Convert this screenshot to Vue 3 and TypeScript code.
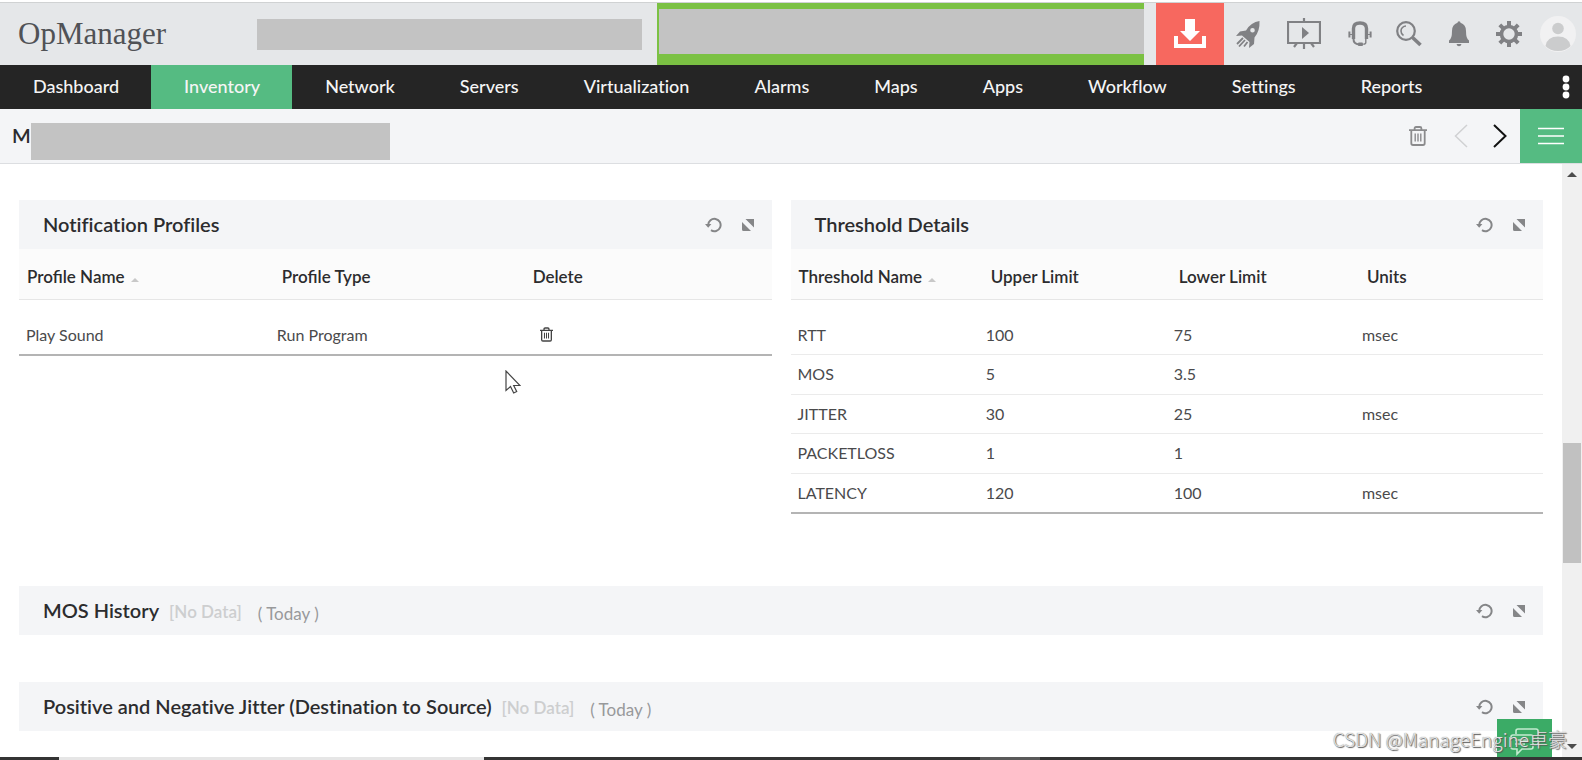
<script setup lang="ts">
interface Column { label: string; sortable?: boolean }

const navItems: string[] = [
  'Dashboard', 'Inventory', 'Network', 'Servers', 'Virtualization', 'Alarms',
  'Maps', 'Apps', 'Workflow', 'Settings', 'Reports',
]
const activeItem = 'Inventory'

const profileColumns: Column[] = [
  { label: 'Profile Name', sortable: true },
  { label: 'Profile Type' },
  { label: 'Delete' },
]
const profiles = [{ name: 'Play Sound', type: 'Run Program' }]

const thresholdColumns: Column[] = [
  { label: 'Threshold Name', sortable: true },
  { label: 'Upper Limit' },
  { label: 'Lower Limit' },
  { label: 'Units' },
]
const thresholds: string[][] = [
  ['RTT', '100', '75', 'msec'],
  ['MOS', '5', '3.5', ''],
  ['JITTER', '30', '25', 'msec'],
  ['PACKETLOSS', '1', '1', ''],
  ['LATENCY', '120', '100', 'msec'],
]

const charts: string[] = ['MOS History', 'Positive and Negative Jitter (Destination to Source)']
</script>

<template>
  <svg class="symbols" aria-hidden="true">
    <symbol id="refresh" viewBox="0 0 17 16">
      <path d="M3.2 8A6.2 6.2 0 1 1 6 13.2" fill="none" stroke="currentColor" stroke-width="2" />
      <path d="M0 7h6.4L3.2 10.8z" fill="currentColor" />
    </symbol>
    <symbol id="expand" viewBox="0 0 12 12">
      <path d="M3.500 0H12v8.500zM0 3L9 12H1.5A1.5 1.5 0 0 1 0 10.5z" fill="currentColor" />
    </symbol>
    <symbol id="trash" viewBox="0 0 18 20">
      <g fill="none" stroke="currentColor" stroke-width="1.8">
        <path d="M0 4.2h18M5.6 4V2.4Q5.6 1 7 1h4q1.4 0 1.4 1.4V4M2.3 4.5v12.8q0 1.7 1.7 1.7h10q1.7 0 1.7-1.7V4.5" />
        <path d="M6.2 7.5v8M9 7.5v8M11.8 7.5v8" stroke-width="1.4" />
      </g>
    </symbol>
  </svg>

  <div class="app">
    <header class="topbar">
      <span class="brand">OpManager</span>
      <div class="notice"></div>
      <div class="banner"><div class="banner-fill"></div></div>
      <div class="tools">
        <button class="download" aria-label="Download">
          <svg width="32" height="30" viewBox="0 0 32 30" fill="#fff">
            <path d="M11 0h10v12h5L16 22 6 12h5z" />
            <path d="M0 17h4v8h24v-8h4v12H0z" />
          </svg>
        </button>
        <button class="tool rocket" aria-label="Quick start">
          <svg width="24" height="28" viewBox="0 0 24 28">
            <path fill="currentColor" fill-rule="evenodd" d="M23.5 1Q15 2 10 10.500L4 11.500 0 16l6-.5 7.500 6.500-.5 6 5-4 .5-6.500Q24 11 23.500 1zM16.500 8a2.300 2.300 0 1 1 0 4.600 2.300 2.300 0 0 1 0-4.600z" />
            <path d="M7 18l-6 6M9 20l-6 6.500M11.500 22L8 26.500" stroke="currentColor" stroke-width="1.8" />
          </svg>
        </button>
        <button class="tool board" aria-label="Presentation">
          <svg width="34" height="32" viewBox="0 0 34 32">
            <path d="M1 4h32v21H1zM17 0v4M17 25v6M10 25l-3 4M24 25l3 4" fill="none" stroke="currentColor" stroke-width="2.200" />
            <path d="M15 9l7 6-7 6z" fill="currentColor" />
          </svg>
        </button>
        <button class="tool headset" aria-label="Support">
          <svg width="24" height="26" viewBox="0 0 24 26" fill="none" stroke="currentColor">
            <path d="M5.500 18V7.500Q5.500 2 12 2t6.500 5.500V18" stroke-width="3.400" />
            <path d="M1.400 10.500v6M22.600 10.500v6" stroke-width="2" />
            <path d="M2 13.500h3M19 13.500h3" stroke-width="1.200" />
            <path d="M5.500 18q0 5 5.500 5.500" stroke-width="2" />
            <rect x="10" y="21.500" width="5" height="3.500" rx="1" fill="currentColor" stroke="none" />
            <path d="M17.800 17v4.500q0 1.500-2.500 1.800" stroke-width="1.400" />
          </svg>
        </button>
        <button class="tool search" aria-label="Search">
          <svg width="26" height="26" viewBox="0 0 26 26" fill="none" stroke="currentColor">
            <circle cx="10" cy="10" r="8.800" stroke-width="2.200" />
            <path d="M10 5a5 5 0 0 0-5 5q0 3 2.500 4.500" stroke-width="1.600" />
            <path d="M16.500 16.500l8 7.500" stroke-width="3.600" />
          </svg>
        </button>
        <button class="tool bell" aria-label="Alerts">
          <svg width="20" height="26" viewBox="0 0 20 26" fill="currentColor">
            <path d="M8.500 1.800a1.500 1.500 0 0 1 3 0Q17 3.500 17 10q0 8 3 9.500V22H0v-2.500Q3 18 3 10 3 3.500 8.500 1.800zM7.500 23h5q-.5 2.200-2.500 2.200T7.500 23z" />
          </svg>
        </button>
        <button class="tool gear" aria-label="Preferences">
          <svg width="26" height="26" viewBox="-13 -13 26 26" fill="none" stroke="currentColor">
            <circle r="7.500" stroke-width="3.600" />
            <path d="M0-13v5M0 13V8M-13 0h5M13 0H8M-9.200-9.200l3.500 3.500M9.200 9.200L5.700 5.700M-9.200 9.200l3.500-3.500M9.200-9.200L5.700-5.700" stroke-width="4" />
          </svg>
        </button>
        <button class="tool avatar" aria-label="Account">
          <svg width="36" height="36" viewBox="0 0 36 36">
            <circle cx="18" cy="18" r="18" fill="#f1f1f2" />
            <circle cx="18" cy="12.500" r="5.800" fill="#cbcccd" />
            <path d="M5.500 30Q7 20.500 18 20.500T30.500 30Q26 35 18 35T5.500 30z" fill="#cbcccd" />
          </svg>
        </button>
      </div>
    </header>

    <nav class="nav">
      <a v-for="item in navItems" :key="item" href="#" class="nav-item" :class="{ active: item === activeItem }">{{ item }}</a>
      <button class="more" aria-label="More">
        <svg width="8" height="24" viewBox="0 0 8 24" fill="#fff">
          <circle cx="4" cy="4" r="3.400" /><circle cx="4" cy="12" r="3.400" /><circle cx="4" cy="20" r="3.400" />
        </svg>
      </button>
    </nav>

    <div class="subbar">
      <h1 class="device">M</h1>
      <div class="device-mask"></div>
      <div class="pager">
        <button class="muted" aria-label="Delete monitor"><svg width="18" height="20"><use href="#trash" /></svg></button>
        <button class="prev" aria-label="Previous">
          <svg width="14" height="24" viewBox="0 0 14 24" fill="none" stroke="currentColor" stroke-width="1.500"><path d="M13 1L1.500 12 13 23" /></svg>
        </button>
        <button class="next" aria-label="Next">
          <svg width="14" height="24" viewBox="0 0 14 24" fill="none" stroke="currentColor" stroke-width="2"><path d="M1 1l11.500 11L1 23" /></svg>
        </button>
        <button class="menu" aria-label="Menu">
          <svg width="26" height="18" viewBox="0 0 26 18" stroke="#fff" stroke-width="1.300"><path d="M0 1.500h26M0 9h26M0 16.500h26" /></svg>
        </button>
      </div>
    </div>

    <div class="body">
      <main class="content">
        <div class="columns">
          <section class="panel">
            <div class="panel-head">
              <h2>Notification Profiles</h2>
              <div class="actions">
                <button aria-label="Refresh"><svg width="17" height="16"><use href="#refresh" /></svg></button>
                <button aria-label="Expand"><svg width="12" height="12"><use href="#expand" /></svg></button>
              </div>
            </div>
            <table>
              <thead>
                <tr>
                  <th v-for="col in profileColumns" :key="col.label" scope="col">
                    {{ col.label }}<span v-if="col.sortable" class="caret"></span>
                  </th>
                </tr>
              </thead>
              <tbody>
                <tr v-for="profile in profiles" :key="profile.name">
                  <td>{{ profile.name }}</td>
                  <td>{{ profile.type }}</td>
                  <td>
                    <button class="row-delete" aria-label="Delete profile"><svg width="13" height="15"><use href="#trash" /></svg></button>
                  </td>
                </tr>
              </tbody>
            </table>
          </section>

          <section class="panel">
            <div class="panel-head">
              <h2>Threshold Details</h2>
              <div class="actions">
                <button aria-label="Refresh"><svg width="17" height="16"><use href="#refresh" /></svg></button>
                <button aria-label="Expand"><svg width="12" height="12"><use href="#expand" /></svg></button>
              </div>
            </div>
            <table>
              <thead>
                <tr>
                  <th v-for="col in thresholdColumns" :key="col.label" scope="col">
                    {{ col.label }}<span v-if="col.sortable" class="caret"></span>
                  </th>
                </tr>
              </thead>
              <tbody>
                <tr v-for="row in thresholds" :key="row[0]">
                  <td v-for="(cell, i) in row" :key="i">{{ cell }}</td>
                </tr>
              </tbody>
            </table>
          </section>
        </div>

        <section v-for="chart in charts" :key="chart" class="chart">
          <div class="panel-head">
            <h2>{{ chart }}</h2>
            <span class="no-data">[No Data]</span>
            <span class="period">( Today )</span>
            <div class="actions">
              <button aria-label="Refresh"><svg width="17" height="16"><use href="#refresh" /></svg></button>
              <button aria-label="Expand"><svg width="12" height="12"><use href="#expand" /></svg></button>
            </div>
          </div>
        </section>
      </main>

      <div class="scroll">
        <span class="arrow up"></span>
        <div class="track"><div class="thumb"></div></div>
        <span class="arrow down"></span>
      </div>
    </div>

    <div class="taskbar"><span class="task"></span><span class="task-dim"></span></div>

    <button class="chat" aria-label="Chat">
      <svg width="30" height="28" viewBox="0 0 30 28" fill="none" stroke="#c4ecd0" stroke-width="1.600">
        <path d="M6 6V3q0-2 2-2h18q2 0 2 2v12q0 2-2 2h-2" />
        <path d="M3 7h18q2 0 2 2v10q0 2-2 2h-9l-5 5v-5H3q-2 0-2-2V9q0-2 2-2zM5 12h13M5 16h10" />
      </svg>
    </button>
    <svg class="cursor" width="16" height="24" viewBox="0 0 16 24" aria-hidden="true">
      <path d="M1 1v19.500l4.500-4 3.200 6.500 3-1.500-3-6h6.300z" fill="#fff" stroke="#444" stroke-width="1.200" />
    </svg>
    <div class="watermark">CSDN @ManageEngine卓豪</div>
  </div>
</template>

<style>
body { margin: 0; background: #fff; }
</style>

<style scoped>
.app {
  position: relative;
  height: 100vh;
  display: flex;
  flex-direction: column;
  overflow: hidden;
  font-family: Lato, "Noto Sans CJK SC", sans-serif;
  color: #2c2c2e;
}
.symbols { position: absolute; width: 0; height: 0; }
button { padding: 0; border: 0; background: none; color: inherit; font: inherit; display: flex; align-items: center; justify-content: center; }
svg { display: block; }

.topbar {
  flex: none;
  display: flex;
  align-items: center;
  height: 62px;
  margin-top: 2px;
  border-top: 1px solid #d0d2d3;
  background: #e5e7e9;
}
.brand { width: 239px; padding-left: 18px; font: 31px/40px "Liberation Serif", serif; color: #505256; }
.notice { width: 385px; height: 31px; margin-right: 15px; background: #c3c3c3; }
.banner { flex: 1; align-self: stretch; padding: 6px 0 11px 2px; background: #7bc143; display: flex; }
.banner-fill { flex: 1; background: #c3c3c3; }
.tools { display: flex; align-items: center; align-self: stretch; margin-left: 12px; color: #808184; }
.download { width: 68px; align-self: stretch; background: #f7685f; }
.rocket { margin-left: 12px; }
.board { margin-left: 27px; }
.headset { margin-left: 27px; }
.search { margin-left: 24px; }
.bell { margin-left: 27px; }
.gear { margin-left: 27px; }
.avatar { margin: 0 6px 0 18px; }

.nav { flex: none; display: flex; height: 44px; background: #252525; }
.nav-item { padding: 0 32px 0 33px; font-size: 18px; line-height: 42px; font-weight: 500; font-variant-ligatures: none; color: #f5f5f5; text-decoration: none; }
.nav-item.active { background: #55bb82; }
.more { margin: 0 12px 0 auto; }

.subbar { flex: none; display: flex; height: 54px; border-bottom: 1px solid #dcdee1; background: #f4f5f7; }
.device { margin: 0; padding-left: 12px; width: 19px; font-size: 20px; line-height: 53px; font-weight: 600; }
.device-mask { width: 359px; height: 37px; margin-top: 14px; background: #c3c3c3; }
.pager { display: flex; margin-left: auto; }
.muted { color: #8b8b8d; }
.prev { margin-left: 27px; color: #d0d1d3; }
.next { margin: 0 13px 0 25px; color: #111; }
.menu { width: 62px; background: #55bb82; }

.body { flex: 1; min-height: 0; display: flex; }
.content { flex: 1; min-width: 0; padding: 36px 19px 0; overflow: hidden; }
.columns { display: grid; grid-template-columns: 1fr 1fr; gap: 19px; align-items: start; min-height: 362px; }
.chart { margin: 24px 0 47px; }
.chart + .chart { margin-top: 0; }
.panel-head { display: flex; align-items: center; height: 49px; padding: 0 18px 0 24px; background: #f4f5f7; }
h2 { margin: 0; padding-bottom: 2px; font-size: 20px; line-height: 28px; font-weight: 600; font-variant-ligatures: none; }
.actions { display: flex; align-items: center; gap: 20px; margin-left: auto; color: #858688; }
.no-data { margin-left: 10px; padding-top: 2px; font-size: 17px; font-weight: 600; color: #cdcecf; }
.period { margin-left: 16px; padding-top: 6px; font-size: 17px; color: #98999b; }

table { width: 100%; border-collapse: collapse; table-layout: fixed; border-bottom: 2px solid #b4b4b4; }
th { box-sizing: border-box; height: 50px; padding: 6px 0 0 12px; text-align: left; font-size: 17px; line-height: 22px; font-weight: 600; background: #fbfbfb; border-bottom: 1px solid #e6e6e6; }
th:first-child { padding-left: 8px; }
td { height: 38px; padding: 0 0 0 7px; font-size: 16px; line-height: 22px; color: #4a4a4c; border-bottom: 1px solid #ebebeb; }
tbody tr:nth-child(even) td { height: 39px; }
tbody tr:first-child td { padding-top: 16px; }
tbody tr:last-child td { border-bottom: 0; }
.caret { display: inline-block; margin-left: 6px; border: 4px solid transparent; border-top: 0; border-bottom-color: #c8c8c8; vertical-align: 1px; }
.row-delete { margin-left: 12px; color: #444; }

.scroll { flex: none; width: 20px; padding: 8px 1px; box-sizing: border-box; display: flex; flex-direction: column; align-items: center; background: #f0f0f0; }
.arrow { border: 5px solid transparent; }
.up { border-top: 0; border-bottom-color: #4c4c4c; }
.down { border-bottom: 0; border-top-color: #4c4c4c; }
.track { flex: 1; width: 100%; display: flex; flex-direction: column; }
.track::before { content: ""; flex: 265; }
.track::after { content: ""; flex: 180; }
.thumb { flex: 120; background: #c1c1c1; }

.taskbar { flex: none; display: flex; height: 3px; background: #343434; }
.task { width: 425px; margin-left: 59px; background: #e6e6e6; }
.task-dim { width: 60px; margin-left: 496px; background: #5a5a5a; }

.chat { position: absolute; right: 30px; bottom: 3px; width: 55px; height: 38px; padding-top: 8px; background: #3bab66; }
.cursor { position: absolute; left: 505px; top: 370px; }
.watermark {
  position: absolute;
  right: 15px;
  bottom: 7px;
  font: 300 19px/28px "Noto Sans CJK SC", sans-serif;
  color: #e4e4e4;
  text-shadow: 1px 1px 1px #555, 0 0 1px #777;
}
</style>
